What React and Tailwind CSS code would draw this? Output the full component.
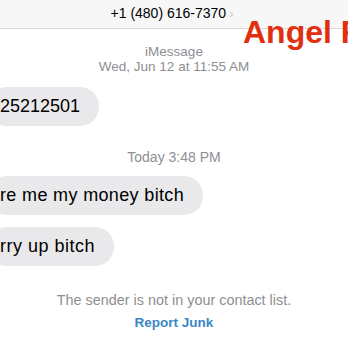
import React from "react";

const Bubble = ({ text, tracking }) => (
  <div className="flex -ml-[12px]">
    <div
      className={`rounded-[19px] bg-[#e9e9eb] pl-3 pr-[19px] h-[39px] flex items-center text-[18px] text-black whitespace-nowrap ${tracking}`}
    >
      {text}
    </div>
  </div>
);

export default function App() {
  return (
    <div
      className="relative w-[348px] h-[348px] overflow-hidden bg-white"
      style={{ fontFamily: '"Liberation Sans", Arial, sans-serif' }}
    >
      {/* header */}
      <div className="h-[29px] bg-[#f7f7f7] border-b border-[#d8d8d8] flex items-start justify-center pt-[3px] pr-[4px]">
        <span className="text-[14px] text-black">+1 (480) 616-7370</span>
        <span className="ml-[3px] mt-[1px] text-[13px] text-[#c7c7cc]">›</span>
      </div>

      {/* name overlay */}
      <div className="absolute left-[243px] top-[16px] text-[32px] leading-none font-bold text-[#e1300f] whitespace-nowrap">
        Angel R
      </div>

      <div className="flex flex-col items-center text-[13.5px] text-[#8e8e93] leading-[15px] mt-[15px]">
        <span>iMessage</span>
        <span>
          <span className="font-medium">Wed, Jun 12</span> at 11:55 AM
        </span>
      </div>

      <div className="mt-[13px]">
        <Bubble text="25212501" tracking="tracking-normal" />
      </div>

      <div className="text-center text-[14px] text-[#8e8e93] leading-[16px] mt-[23px]">
        <span className="font-medium">Today</span> 3:48 PM
      </div>

      <div className="mt-[11px]">
        <Bubble text="re me my money bitch" tracking="tracking-[0.35px]" />
      </div>
      <div className="mt-[12px]">
        <Bubble text="rry up bitch" tracking="tracking-[0.5px]" />
      </div>

      <div className="text-center text-[14.4px] text-[#8e8e93] mt-[26px] leading-[16px]">
        The sender is not in your contact list.
      </div>
      <div className="text-center text-[13.5px] font-bold text-[#3a86c6] mt-[7px] leading-[16px]">
        Report Junk
      </div>
    </div>
  );
}
